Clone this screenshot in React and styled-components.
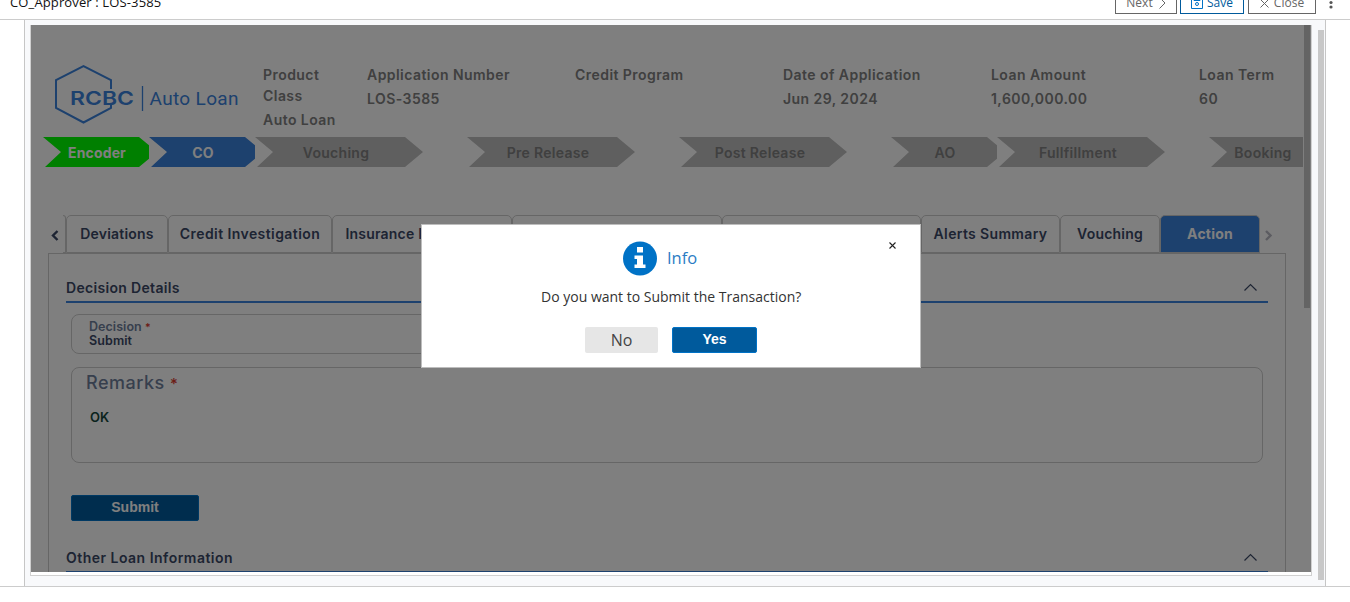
import React from "react";
import styled, { createGlobalStyle, css } from "styled-components";

const blue = "#3a82dc";
const ink = "#3b4866";

const Global = createGlobalStyle`
  *, *::before, *::after { box-sizing: border-box; }
  body { margin: 0; background: #fff; font-family: "Open Sans", sans-serif; overflow: hidden; }
  button { font: inherit; padding: 0; }
`;

const Page = styled.div`
  height: 602px;
  display: flex;
  flex-direction: column;
  overflow: hidden;
`;
const TopBar = styled.header`
  height: 20px;
  flex: none;
  display: flex;
  align-items: flex-end;
  border-bottom: 1px solid #ccc;
  padding: 0 13px 0 10px;
`;
const TopTitle = styled.div`
  flex: 1;
  font-size: 13px;
  line-height: 18px;
  margin-bottom: 8px;
  letter-spacing: 0.13px;
  color: #111;
`;
const TopButton = styled.button`
  width: ${(p) => p.$w}px;
  height: 24px;
  margin: 0 ${(p) => p.$gap}px 5px 0;
  display: flex;
  align-items: center;
  justify-content: center;
  gap: ${(p) => p.$inner || 4}px;
  border: 1px solid ${(p) => (p.$primary ? "#005a9c" : "#666")};
  background: #fff;
  color: ${(p) => (p.$primary ? "#005a9c" : "#666")};
  font-size: 12px;
  line-height: 16px;
  padding-top: 2px;
`;
const Dots = styled.svg`
  margin: 0 0 10px 9px;
`;
const Workspace = styled.main`
  height: 567px;
  flex: none;
  border-bottom: 1px solid #ccc;
  padding: 0 24px;
`;
const Gutter = styled.div`
  height: 566px;
  width: 1302px;
  border: solid #c6c6c6;
  border-width: 0 1px;
  background: #f8f9fb;
  display: flex;
  padding: 5px 1px 0 5px;
`;
const Frame = styled.div`
  width: 1282px;
  height: 551px;
  border: solid #d0d0d0;
  border-width: 0 1px 1px;
  background: #fff;
`;
const OuterThumb = styled.div`
  width: 6px;
  height: 550px;
  margin: 5px 0 0 6px;
  background: #c8c8c8;
`;
const Screen = styled.div`
  position: relative;
  width: 1280px;
  height: 547px;
  overflow: hidden;
  display: flex;
  background: #fff;
  font-family: Inter, sans-serif;
`;
const Content = styled.div`
  width: 1273px;
  flex: none;
`;
const InnerThumb = styled.div`
  width: 6px;
  height: 283px;
  background: #c8c8c8;
`;

const Summary = styled.section`
  height: 112px;
  padding: 39px 0 0 22px;
  display: flex;
  overflow: hidden;
`;
const Logo = styled.svg`
  width: 210px;
  height: 64px;
  flex: none;
`;
const Fact = styled.div`
  width: ${(p) => p.$w || 208}px;
  flex: none;
  color: #808080;
  font-weight: 600;
  font-size: 14px;
  letter-spacing: 0.45px;
  white-space: nowrap;
`;
const FactName = styled.div`
  line-height: 21px;
  margin-bottom: 3px;
`;
const FactValue = styled.div`
  line-height: 21px;
`;

const Steps = styled.div`
  height: 30px;
  padding-left: 12px;
  display: flex;
  overflow: hidden;
`;
const StepCell = styled.div`
  width: ${(p) => p.$w}px;
  flex: none;
  overflow: hidden;
`;
const StepShape = styled.div`
  width: ${(p) => (p.$narrow ? 114 : 168)}px;
  height: 30px;
  clip-path: polygon(0 0, calc(100% - 18px) 0, 100% 50%, calc(100% - 18px) 100%, 2px 100%, 18px 50%);
  background: ${(p) => p.$bg || "#bfbfbf"};
`;
const StepLabel = styled.div`
  width: ${(p) => p.$w}px;
  text-align: center;
  font-size: 14px;
  line-height: 32px;
  font-weight: ${(p) => (p.$lit ? 700 : 600)};
  letter-spacing: ${(p) => (p.$lit ? 0.15 : 0.3)}px;
  color: ${(p) => (p.$lit ? "#fff" : "#808080")};
`;

const TabRow = styled.nav`
  height: 38px;
  margin: 48px 0 0 17px;
  display: flex;
`;
const Arrow = styled.svg`
  width: 15px;
  height: 38px;
  flex: none;
`;
const TabSliver = styled.div`
  width: 3px;
  height: 38px;
  border: solid #ccc;
  border-width: 1px 1px 1px 0;
  border-top-right-radius: 5px;
`;
const Tab = styled.div`
  width: ${(p) => p.$w}px;
  height: 38px;
  flex: none;
  border: 1px solid #ccc;
  border-radius: 5px 5px 0 0;
  text-align: center;
  font-size: 14px;
  line-height: 36px;
  font-weight: 600;
  letter-spacing: ${(p) => p.$track ?? 0.2}px;
  color: ${ink};
  white-space: nowrap;
  ${(p) => p.$active && css`
    background: ${blue};
    color: #fff;
    font-weight: 700;
  `}
`;
const Panel = styled.section`
  margin-left: 17px;
  width: 1238px;
  height: 420px;
  border: 1px solid #ccc;
  padding: 23px 17px 0;
`;
const SectionHead = styled.div`
  height: 26px;
  border-bottom: 2px solid ${blue};
  display: flex;
  justify-content: space-between;
  padding-right: 10px;
  font-size: 14px;
  line-height: 21px;
  font-weight: 600;
  letter-spacing: ${(p) => p.$track ?? 0.32}px;
  color: ${ink};
`;
const Chevron = styled.svg`
  width: 15px;
  height: 22px;
`;
const Field = styled.div`
  width: ${(p) => p.$w}px;
  height: ${(p) => p.$h}px;
  margin: ${(p) => p.$top}px 0 0 5px;
  padding: ${(p) => p.$pad};
  border: 1px solid #ccc;
  border-radius: 8px;
`;
const FieldLabel = styled.div`
  font-size: ${(p) => (p.$large ? 18 : 12.5)}px;
  line-height: ${(p) => (p.$large ? 22 : 13)}px;
  font-weight: ${(p) => (p.$large ? 500 : 600)};
  letter-spacing: ${(p) => (p.$large ? 0.5 : 0.05)}px;
  color: #6f7f9b;
`;
const Star = styled.span`
  color: #d93a2f;
  font-size: ${(p) => (p.$large ? 15 : 10.5)}px;
`;
const FieldValue = styled.div`
  margin: ${(p) => p.$m || 0};
  font-size: ${(p) => p.$size || 12.5}px;
  line-height: 13px;
  font-weight: 600;
  letter-spacing: 0.1px;
  color: ${(p) => p.$color || ink};
`;
const ActionButton = styled.button`
  display: block;
  width: ${(p) => p.$w}px;
  height: 26px;
  margin: ${(p) => p.$m || 0};
  border: 1px solid #0072c6;
  border-radius: 2px;
  background: #005a9c;
  color: #fff;
  font: bold 14px/22px "Liberation Sans", Arial, sans-serif;
  padding-bottom: 2px;
`;

const Backdrop = styled.div`
  position: absolute;
  inset: 0;
  background: rgba(0, 0, 0, 0.5);
`;
const Dialog = styled.div`
  position: absolute;
  left: 390px;
  top: 199px;
  width: 500px;
  height: 144px;
  border: 1px solid #bdbdbd;
  background: #fff;
  font-family: "Open Sans", sans-serif;
  padding-top: 16px;
`;
const DialogTitle = styled.div`
  display: flex;
  gap: 10px;
  margin-left: 201px;
  height: 34px;
  font-size: 16.5px;
  line-height: 33px;
  color: #2a7cc4;
`;
const DialogText = styled.p`
  margin: 12px 0 0 119px;
  font-size: 14px;
  line-height: 20px;
  white-space: nowrap;
  color: #333;
`;
const DialogActions = styled.div`
  display: flex;
  gap: 14px;
  margin: 20px 0 0 163px;
`;
const PlainButton = styled.button`
  width: 73px;
  height: 26px;
  border: 0;
  border-radius: 2px;
  background: #e6e6e6;
  color: #444;
  font-size: 16px;
  line-height: 26px;
`;
const CloseMark = styled.svg`
  position: absolute;
  left: 466px;
  top: 16px;
`;

const facts = [
  ["Application Number", "LOS-3585"],
  ["Credit Program", ""],
  ["Date of Application", "Jun 29, 2024"],
  ["Loan Amount", "1,600,000.00"],
  ["Loan Term", "60"],
];
const steps = [
  { name: "Encoder", w: 106, narrow: true, bg: "#00ff00" },
  { name: "CO", w: 106, narrow: true, bg: blue },
  { name: "Vouching", w: 212, label: 162 },
  { name: "Pre Release", w: 212, label: 162 },
  { name: "Post Release", w: 212, label: 162 },
  { name: "AO", w: 106, narrow: true },
  { name: "Fullfillment", w: 212, label: 162 },
  { name: "Booking", w: 94 },
];
const tabs = [
  ["Deviations", 102],
  ["Credit Investigation", 164, 0.42],
  ["Insurance Information", 180],
  ["", 210],
  ["", 199],
  ["Alerts Summary", 139, 0.35],
  ["Vouching", 100],
  ["Action", 100],
];

const Collapse = () => (
  <Chevron viewBox="0 0 15 22">
    <path d="M1.500 13.500 7.500 7.500l6 6" fill="none" stroke={ink} strokeWidth="1.200" />
  </Chevron>
);

export default function App() {
  return (
    <Page>
      <Global />
      <TopBar>
        <TopTitle>CO_Approver : LOS-3585</TopTitle>
        <TopButton $w={62} $gap={3} $inner={5}>
          Next
          <svg width="8" height="12" viewBox="0 0 8 12"><path d="M1.500.5 7 6l-5.500 5.500" fill="none" stroke="currentColor" /></svg>
        </TopButton>
        <TopButton $w={64} $gap={4} $primary>
          <svg width="12" height="12" viewBox="0 0 12 12" fill="none" stroke="#0072c6">
            <path d="M.5.5h11v11H.5zM3 .5v3h6v-3" /><circle cx="6" cy="7" r="1.500" />
          </svg>
          Save
        </TopButton>
        <TopButton $w={68} $gap={0} $inner={5}>
          <svg width="9" height="9" viewBox="0 0 9 9"><path d="m.5.5 8 8m0-8-8 8" stroke="currentColor" /></svg>
          Close
        </TopButton>
        <Dots width="12" height="14" viewBox="0 0 12 14" fill="#555">
          <circle cx="6" cy="3" r="1.600" /><circle cx="6" cy="7.500" r="1.600" /><circle cx="6" cy="12" r="1.600" />
        </Dots>
      </TopBar>
      <Workspace>
        <Gutter>
          <Frame>
            <Screen>
              <Content>
                <Summary>
                  <Logo viewBox="0 0 210 64">
                    <path d="M58 25V16L30.500 2 3 16v28l27.500 14.500L58 44v-3" fill="none" stroke={blue} strokeWidth="2" />
                    <text x="17" y="41" fill={blue} fontFamily="Inter, sans-serif" fontWeight="600" fontSize="19" textLength="64" lengthAdjust="spacingAndGlyphs">RCBC</text>
                    <path d="M89.500 22v25" stroke={blue} strokeWidth="1.300" />
                    <text x="96.500" y="41" fill={blue} fontFamily="Roboto, sans-serif" fontSize="19" textLength="89">Auto Loan</text>
                  </Logo>
                  <Fact $w={104}>
                    <FactName>Product<br />Class</FactName>
                    <FactValue>Auto Loan</FactValue>
                  </Fact>
                  {facts.map(([name, value]) => (
                    <Fact key={name}>
                      <FactName>{name}</FactName>
                      <FactValue>{value}</FactValue>
                    </Fact>
                  ))}
                </Summary>
                <Steps>
                  {steps.map((s) => (
                    <StepCell key={s.name} $w={s.w}>
                      <StepShape $narrow={s.narrow} $bg={s.bg}>
                        <StepLabel $w={s.label || 108} $lit={!!s.bg}>{s.name}</StepLabel>
                      </StepShape>
                    </StepCell>
                  ))}
                </Steps>
                <TabRow>
                  <Arrow viewBox="0 0 15 38"><path d="m9.500 16-4.500 4.500 4.500 4.500" fill="none" stroke={ink} strokeWidth="2.400" /></Arrow>
                  <TabSliver />
                  {tabs.map(([name, w, track], i) => (
                    <Tab key={i} $w={w} $track={track} $active={name === "Action"}>{name}</Tab>
                  ))}
                  <Arrow viewBox="0 0 15 38"><path d="m6 16 4.500 4.500-4.500 4.500" fill="none" stroke="#b9b9c2" strokeWidth="2.400" /></Arrow>
                </TabRow>
                <Panel>
                  <SectionHead>Decision Details<Collapse /></SectionHead>
                  <Field $w={400} $h={40} $top={11} $pad="5px 0 0 17px">
                    <FieldLabel>Decision <Star>*</Star></FieldLabel>
                    <FieldValue>Submit</FieldValue>
                  </Field>
                  <Field $w={1192} $h={96} $top={13} $pad="4px 0 0 14px">
                    <FieldLabel $large>Remarks <Star $large>*</Star></FieldLabel>
                    <FieldValue $m="16px 0 0 4px" $size={13} $color="#16483c">OK</FieldValue>
                  </Field>
                  <ActionButton $w={128} $m="32px 0 26px 5px">Submit</ActionButton>
                  <SectionHead $track={0.48}>Other Loan Information<Collapse /></SectionHead>
                </Panel>
              </Content>
              <InnerThumb />
              <Backdrop />
              <Dialog>
                <DialogTitle>
                  <svg width="34" height="35" viewBox="0 -0.500 34 35">
                    <circle cx="17" cy="17" r="17" fill="#0072c6" />
                    <path d="M14 5.500h6v5.500h-6zM11.500 14h8.500v9h2.500v3.500h-11V23H14v-5.500h-2.500z" fill="#fff" />
                  </svg>
                  Info
                </DialogTitle>
                <DialogText>Do you want to Submit the Transaction?</DialogText>
                <DialogActions>
                  <PlainButton>No</PlainButton>
                  <ActionButton $w={85}>Yes</ActionButton>
                </DialogActions>
                <CloseMark width="9" height="9" viewBox="0 0 9 9"><path d="m1.500 1.500 6 6m0-6-6 6" stroke="#222" strokeWidth="1.100" /></CloseMark>
              </Dialog>
            </Screen>
          </Frame>
          <OuterThumb />
        </Gutter>
      </Workspace>
    </Page>
  );
}
